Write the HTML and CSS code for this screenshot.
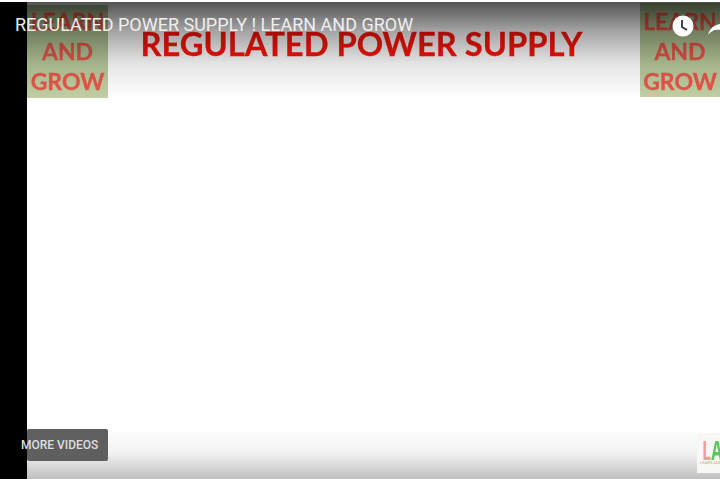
FILE: index.html
```html
<!DOCTYPE html>
<html lang="en">
<head>
  <meta charset="UTF-8">
  <title>Regulated Power Supply</title>
  <link rel="stylesheet" href="styles.css">
</head>
<body>
  <div class="player">
    <div class="pillar"></div>

    <!-- Video frame -->
    <div class="frame">
      <div class="logo logo-left">
        <span>LEARN</span>
        <span>AND</span>
        <span>GROW</span>
      </div>
      <h1 class="headline">REGULATED POWER SUPPLY</h1>
      <div class="logo logo-right">
        <span>LEARN</span>
        <span>AND</span>
        <span>GROW</span>
      </div>
    </div>

    <!-- Player chrome -->
    <div class="shade-top"></div>
    <div class="shade-bottom"></div>
    <div class="title">REGULATED POWER SUPPLY ! LEARN AND GROW</div>
    <svg class="clock" width="22" height="22" viewBox="0 0 22 22">
      <circle cx="11" cy="11" r="10.5" fill="#fff"/>
      <path d="M10 5v7l5 3" fill="none" stroke="#333" stroke-width="1.8"/>
    </svg>
    <svg class="share" width="12" height="16" viewBox="0 0 12 16">
      <path d="M0 14C2 7 6 4 12 3V0l0 9C7 8 3 10 0 14z" fill="#fff"/>
    </svg>
    <div class="more-videos"><span>MORE VIDEOS</span></div>
    <div class="watermark">
      <div class="mark-letters"><span class="mark-l">L</span><span class="mark-a">A</span></div>
      <div class="mark-small">LEARN AND</div>
    </div>
  </div>
</body>
</html>
```

FILE: styles.css
```css
html, body {
  margin: 0;
  height: 100%;
  background: #fff;
  overflow: hidden;
}
.player {
  position: relative;
  display: flex;
  height: 477px;
  margin-top: 2px;
  overflow: hidden;
  font-family: Roboto, Arial, sans-serif;
}
.pillar {
  width: 27px;
  flex: none;
  background: #000;
}
.frame {
  flex: 1;
  display: flex;
  justify-content: space-between;
  align-items: flex-start;
  background: #fff;
  min-width: 0;
}
.logo {
  display: flex;
  flex-direction: column;
  align-items: center;
  flex: none;
  background: linear-gradient(#a9bd8b, #c0cfa3);
  color: #e8564a;
  font-family: Lato, "Open Sans", sans-serif;
  font-weight: 700;
  font-size: 23px;
  line-height: 30px;
  -webkit-text-stroke: 0.3px currentColor;
  filter: blur(0.6px);
}
.logo-left {
  width: 81px;
  height: 92px;
  margin-top: 3px;
  padding-top: 1px;
}
.logo-right {
  width: 80px;
  height: 91px;
  margin-top: 1px;
  padding-top: 3px;
}
.headline {
  margin: 21px 25px 0 0;
  color: #ff1408;
  font-family: Lato, "Open Sans", sans-serif;
  font-weight: 700;
  font-size: 32.7px;
  line-height: 42px;
  white-space: nowrap;
  -webkit-text-stroke: 0.3px currentColor;
  filter: blur(0.5px);
}
.shade-top {
  position: absolute;
  top: 0;
  left: 27px;
  right: 0;
  height: 96px;
  background: linear-gradient(rgba(0, 0, 0, 0.68), rgba(0, 0, 0, 0.36) 30%, rgba(0, 0, 0, 0.1) 65%, rgba(0, 0, 0, 0));
}
.shade-bottom {
  position: absolute;
  bottom: 0;
  left: 27px;
  right: 0;
  height: 50px;
  background: linear-gradient(rgba(0, 0, 0, 0), rgba(0, 0, 0, 0.06) 50%, rgba(0, 0, 0, 0.25));
}
.title {
  position: absolute;
  top: 12px;
  left: 15px;
  color: #eee;
  font-size: 18px;
  line-height: 22px;
  white-space: nowrap;
}
.clock {
  position: absolute;
  top: 13px;
  left: 672px;
}
.share {
  position: absolute;
  top: 19px;
  left: 708px;
}
.more-videos {
  position: absolute;
  top: 427px;
  left: 27px;
  width: 81px;
  height: 32px;
  background: #5f5f5f;
  border-radius: 2px;
}
.more-videos span {
  position: absolute;
  top: 0;
  left: -6px;
  color: #ddd;
  font-size: 12px;
  font-weight: 500;
  line-height: 32px;
  white-space: nowrap;
}
.watermark {
  position: absolute;
  top: 431px;
  left: 697px;
  width: 23px;
  height: 40px;
  background: #f7f7f5;
  overflow: hidden;
}
.mark-letters {
  display: flex;
  margin: 3px 0 0 5px;
  font-size: 27px;
  font-weight: 700;
  line-height: 28px;
  font-family: "Open Sans", sans-serif;
  transform: scaleX(0.6);
  transform-origin: left;
}
.mark-l {
  color: #f59a9a;
}
.mark-a {
  color: #5cc55c;
}
.mark-small {
  margin: -4px 0 0 3px;
  color: #d8a878;
  font-size: 4px;
  line-height: 5px;
  white-space: nowrap;
}
```
